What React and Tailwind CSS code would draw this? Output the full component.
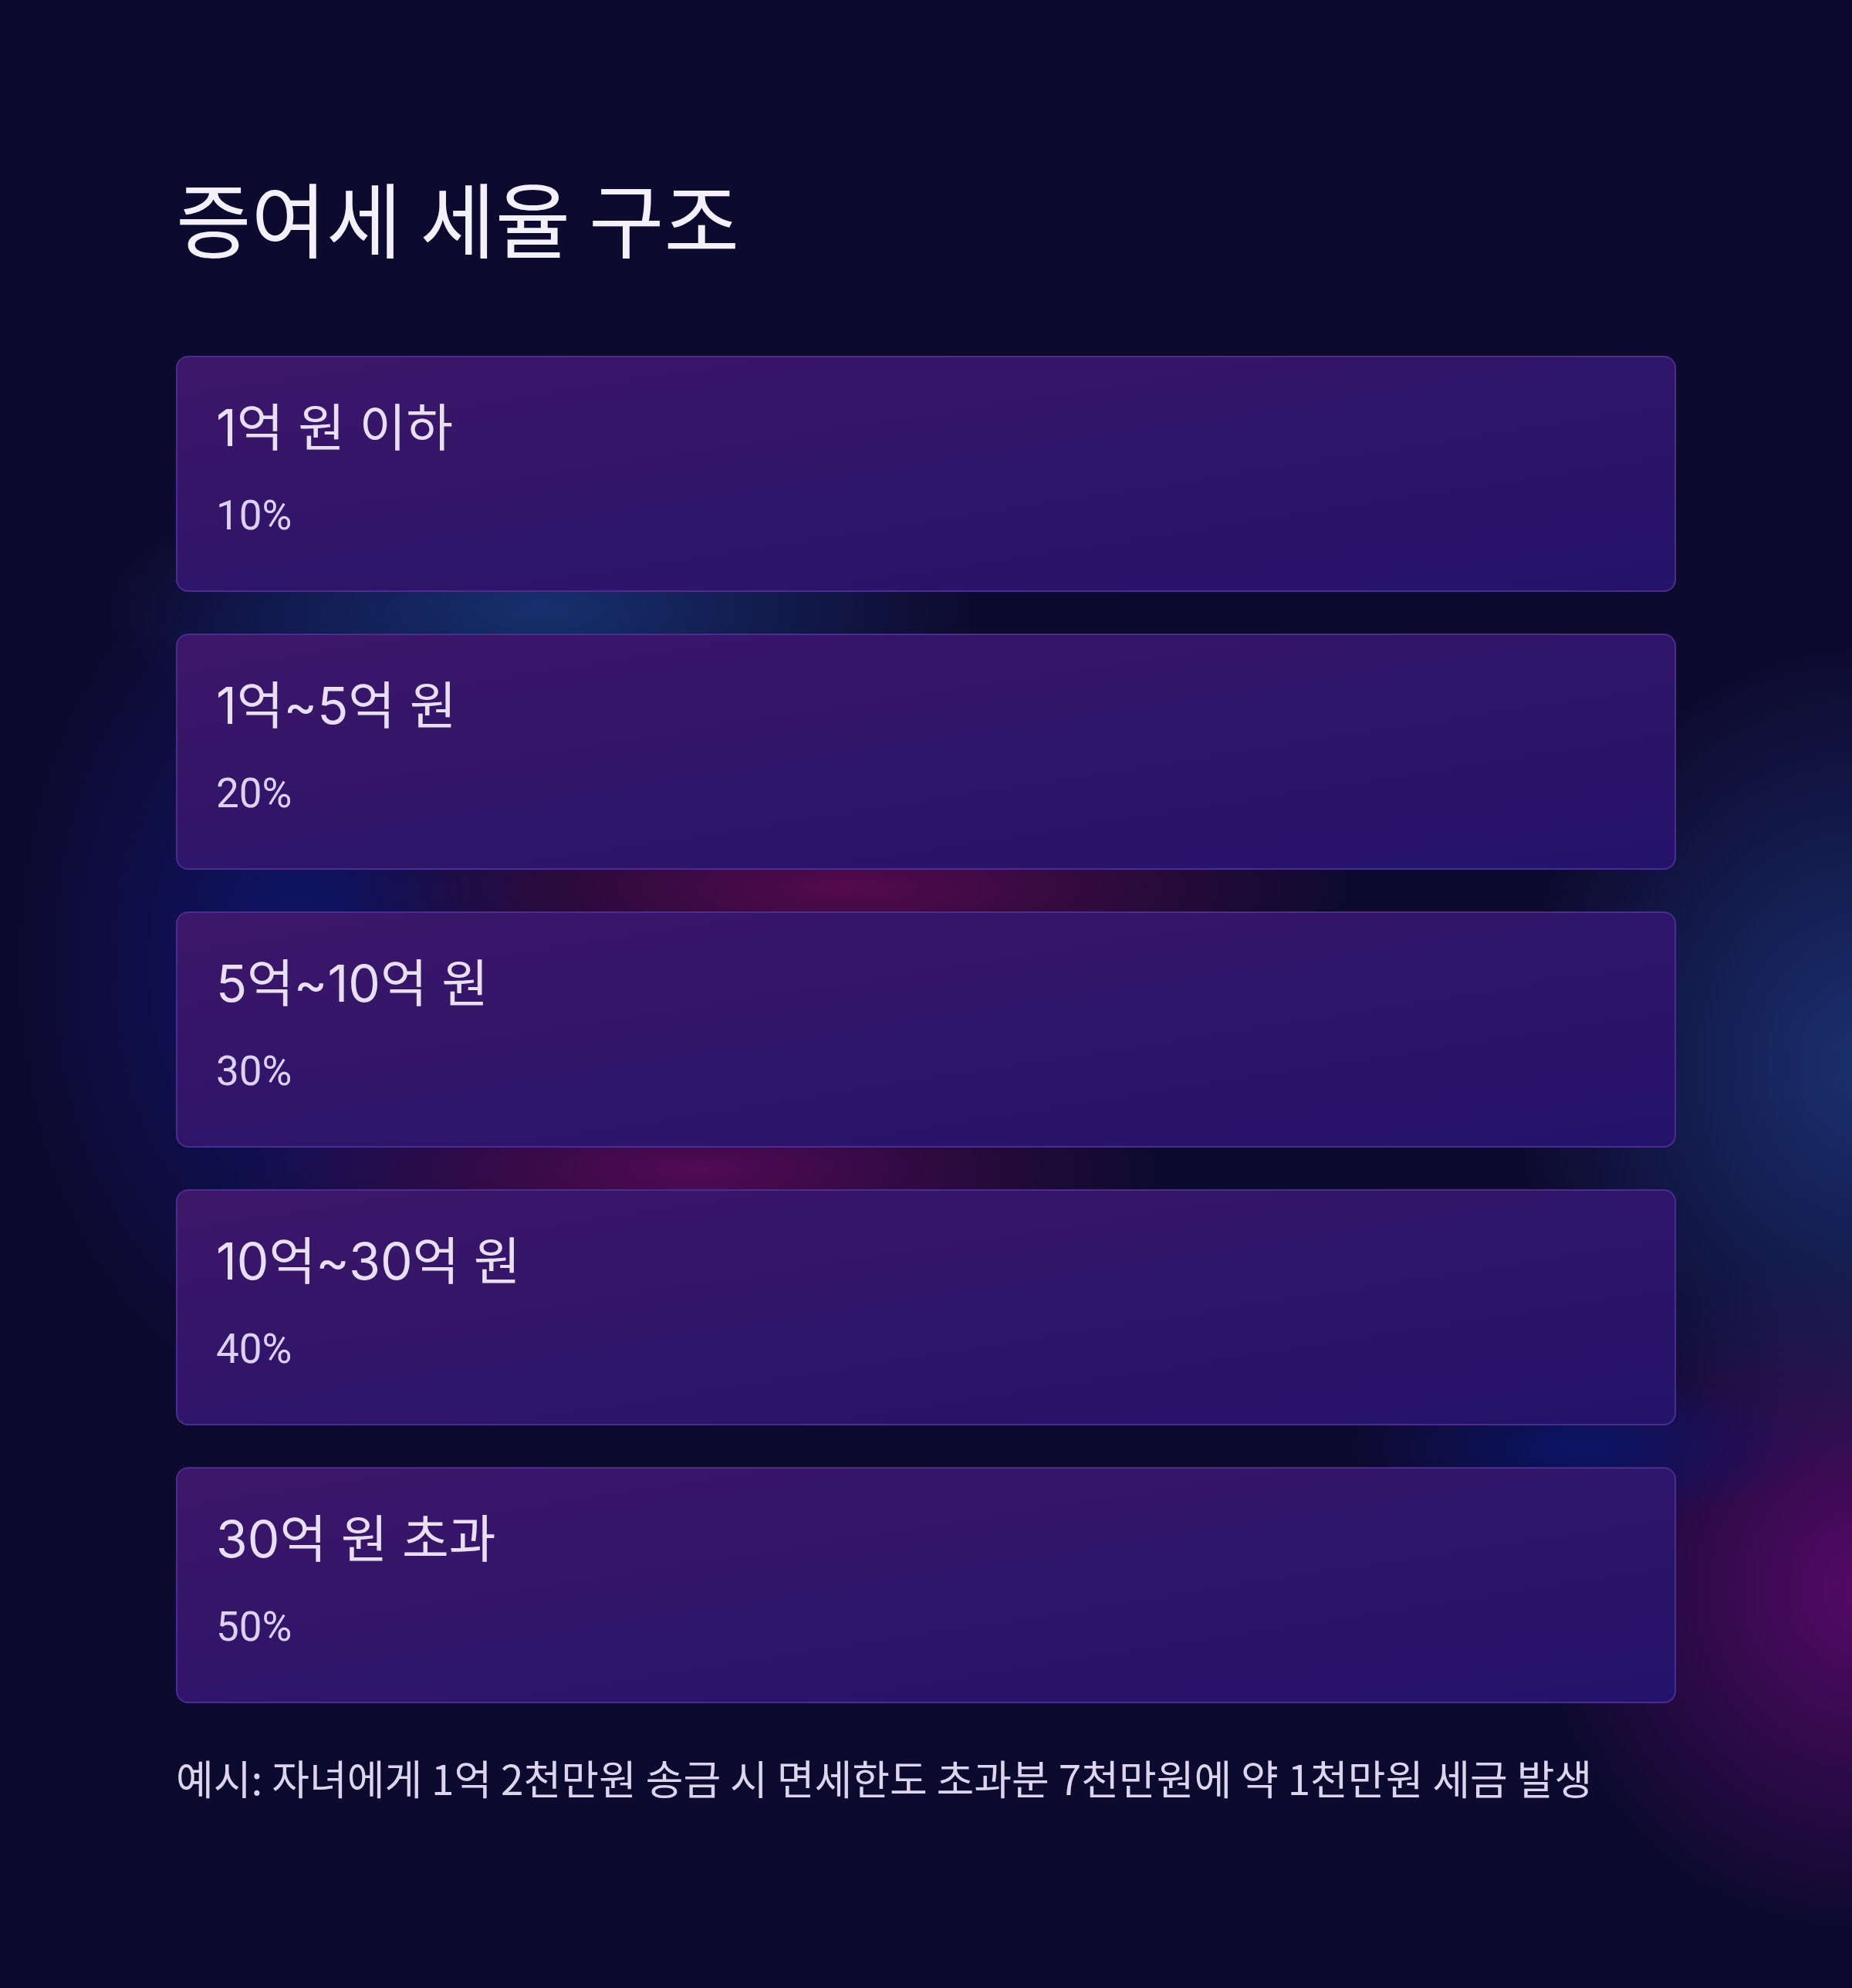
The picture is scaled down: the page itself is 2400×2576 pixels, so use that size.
const brackets = [
  { range: '1억 원 이하', rate: '10%' },
  { range: '1억~5억 원', rate: '20%' },
  { range: '5억~10억 원', rate: '30%' },
  { range: '10억~30억 원', rate: '40%' },
  { range: '30억 원 초과', rate: '50%' },
];

export default function App() {
  return (
    <div className="w-full min-h-[2576px] overflow-hidden bg-[#0d0a2f] bg-[radial-gradient(ellipse_300px_100px_at_2050px_1875px,rgba(12,22,110,0.9),transparent),radial-gradient(ellipse_560px_190px_at_700px_790px,rgba(24,52,118,0.9),transparent),radial-gradient(ellipse_650px_150px_at_1100px_1150px,rgba(88,10,80,0.95),transparent),radial-gradient(ellipse_600px_150px_at_900px_1515px,rgba(86,10,86,0.95),transparent),radial-gradient(ellipse_360px_560px_at_380px_1250px,rgba(16,22,115,0.85),transparent),radial-gradient(ellipse_460px_540px_at_2420px_1380px,rgba(28,52,118,0.9),transparent),radial-gradient(ellipse_420px_440px_at_2420px_2060px,rgba(90,10,106,0.95),transparent)] font-['Noto_Sans_CJK_KR',sans-serif]">
      <div className="px-[228px] pt-[216px]">
        <h1 className="text-[106px] leading-[128px] font-normal text-[#f3f0f9]">
          증여세 세율 구조
        </h1>

        <div className="mt-[117px] flex flex-col gap-[54px]">
          {brackets.map((b) => (
            <div
              key={b.rate}
              className="flex flex-col rounded-[16px] border-2 border-[#4a2d8e] bg-linear-to-br from-[#3d1669] via-[#2f1569] to-[#24136b] pl-[50px] pt-[50px] pb-[66px]"
            >
              <div className="font-['Inter','Noto_Sans_CJK_KR',sans-serif] text-[66px] leading-[82px] text-[#e9dff3]">
                {b.range}
              </div>
              <div className="mt-[42px] font-['Roboto',sans-serif] font-normal text-[53px] leading-[62px] text-[#dcd1ee]">
                {b.rate}
              </div>
            </div>
          ))}
        </div>

        <p className="mt-[56px] text-[53px] leading-[80px] text-[#ddd5ed]">
          예시: 자녀에게 1억 2천만원 송금 시 면세한도 초과분 7천만원에 약 1천만원 세금 발생
        </p>
      </div>
    </div>
  );
}
